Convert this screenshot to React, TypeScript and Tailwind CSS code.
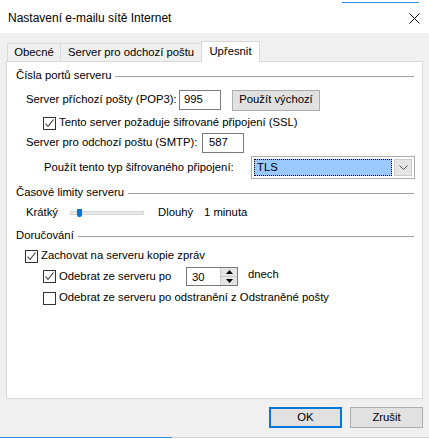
import React from "react";

function Check({ checked }: { checked: boolean }) {
  return (
    <div className="w-[13px] h-[13px] border border-[#333333] bg-white flex items-center justify-center shrink-0">
      {checked && (
        <svg width="11" height="11" viewBox="0 0 11 11">
          <polyline points="1.5,5.5 4,8.5 9.5,1.5" fill="none" stroke="#333333" strokeWidth="1.1" />
        </svg>
      )}
    </div>
  );
}

function GroupHeader({ title }: { title: string }) {
  return (
    <div className="flex items-center h-[16px] pl-[9px] pr-[8px]">
      <span className="whitespace-nowrap">{title}</span>
      <div className="flex-1 h-px bg-[#a0a0a0] ml-[4px]" />
    </div>
  );
}

export default function App() {
  return (
    <div
      className="w-[429px] h-[439px] bg-[#f0f0f0] flex flex-col overflow-hidden text-[11.3px] leading-none text-black whitespace-nowrap"
      style={{ fontFamily: '"Liberation Sans", Arial, sans-serif' }}
    >
      {/* partial window above */}
      <div className="h-[3px] bg-white flex justify-between overflow-hidden">
        <span className="mt-[-10px] ml-[8px] text-[12px] leading-[13px]">onnace u uživatel</span>
        <span className="mt-[-10px] mr-[10px] text-[12px] leading-[13px] border-b border-[#3c8ee0]">Test nastavení</span>
      </div>
      {/* title bar */}
      <div className="h-[30px] bg-white flex items-center justify-between pl-[8px] pr-[8px]">
        <span className="text-[12px]">Nastavení e-mailu sítě Internet</span>
        <svg width="11" height="11" viewBox="0 0 11 11" className="mr-[1px]">
          <line x1="0.5" y1="0.5" x2="10.5" y2="10.5" stroke="#000" strokeWidth="1" />
          <line x1="10.5" y1="0.5" x2="0.5" y2="10.5" stroke="#000" strokeWidth="1" />
        </svg>
      </div>
      {/* body */}
      <div className="flex-1 flex flex-col pt-[7px] px-[6px]">
        {/* tabs */}
        <div className="flex items-end h-[21px] pl-[1px]">
          <div className="h-[18px] w-[53px] border-t border-l border-[#d9d9d9] flex items-center justify-center bg-[#f0f0f0]">
            Obecné
          </div>
          <div className="h-[18px] w-[141px] border-t border-l border-[#d9d9d9] flex items-center justify-center bg-[#f0f0f0]">
            Server pro odchozí poštu
          </div>
          <div className="h-[21px] w-[59px] border-t border-l border-r border-[#d9d9d9] flex items-center justify-center bg-white relative z-10 mb-[-1px] pb-[1px]">
            Upřesnit
          </div>
        </div>
        {/* panel */}
        <div className="h-[338px] bg-white border border-[#d9d9d9] flex flex-col">
          <div className="mt-[6px]">
            <GroupHeader title="Čísla portů serveru" />
          </div>
          {/* POP3 */}
          <div className="mt-[6px] h-[20px] flex items-center pl-[19px]">
            <span className="w-[153px]">Server příchozí pošty (POP3):</span>
            <div className="w-[42px] h-[20px] border border-[#7a7a7a] flex items-center pl-[4px]">995</div>
            <div className="ml-[11px] w-[88px] h-[21px] bg-[#e1e1e1] border border-[#adadad] flex items-center justify-center">
              Použít výchozí
            </div>
          </div>
          {/* SSL */}
          <div className="mt-[6px] h-[14px] flex items-center pl-[36px] gap-[3px]">
            <Check checked />
            <span>Tento server požaduje šifrované připojení (SSL)</span>
          </div>
          {/* SMTP */}
          <div className="mt-[3px] h-[20px] flex items-center pl-[19px]">
            <span className="w-[176px]">Server pro odchozí poštu (SMTP):</span>
            <div className="w-[42px] h-[20px] border border-[#7a7a7a] flex items-center pl-[6px]">587</div>
          </div>
          {/* encryption */}
          <div className="mt-[3px] h-[23px] flex items-center pl-[37px]">
            <span className="w-[207px]">Použít tento typ šifrovaného připojení:</span>
            <div className="w-[164px] h-[23px] border border-[#adadad] bg-white flex items-center p-[2px] gap-[2px]">
              <div className="flex-1 h-[17px] bg-[#99c9ff] border border-dotted border-black flex items-center pl-[2px]">
                TLS
              </div>
              <div className="w-[18px] h-[17px] bg-[#e5e5e5] border border-[#cccccc] flex items-center justify-center">
                <svg width="9" height="5" viewBox="0 0 9 5">
                  <polyline points="0.5,0.5 4.5,4.5 8.5,0.5" fill="none" stroke="#555" strokeWidth="1" />
                </svg>
              </div>
            </div>
          </div>
          <div className="mt-[6px]">
            <GroupHeader title="Časové limity serveru" />
          </div>
          {/* slider */}
          <div className="mt-[4px] h-[16px] flex items-center pl-[19px]">
            <span className="w-[44px]">Krátký</span>
            <div className="w-[74px] h-[4px] bg-[#e7eaea] border border-[#d6d6d6] flex items-center">
              <div className="ml-[6px] w-[5px] h-[8px] bg-[#0078d7] rounded-b-[2px]" />
            </div>
            <span className="ml-[14px] w-[46px]">Dlouhý</span>
            <span>1 minuta</span>
          </div>
          <div className="mt-[7px]">
            <GroupHeader title="Doručování" />
          </div>
          {/* keep copies */}
          <div className="mt-[5px] h-[14px] flex items-center pl-[18px] gap-[3px]">
            <Check checked />
            <span>Zachovat na serveru kopie zpráv</span>
          </div>
          {/* remove after */}
          <div className="mt-[4px] h-[19px] flex items-center pl-[36px]">
            <Check checked />
            <span className="ml-[3px] w-[127px]">Odebrat ze serveru po</span>
            <div className="w-[52px] h-[19px] border border-[#7a7a7a] flex">
              <div className="flex-1 flex items-center pl-[5px] pt-[2px]">30</div>
              <div className="w-[17px] flex flex-col border-l border-[#cccccc]">
                <div className="flex-1 bg-[#e5e5e5] border-b border-[#cccccc] flex items-center justify-center">
                  <svg width="7" height="4" viewBox="0 0 7 4">
                    <polygon points="0,4 7,4 3.5,0" fill="#000" />
                  </svg>
                </div>
                <div className="flex-1 bg-[#e5e5e5] flex items-center justify-center">
                  <svg width="7" height="4" viewBox="0 0 7 4">
                    <polygon points="0,0 7,0 3.5,4" fill="#000" />
                  </svg>
                </div>
              </div>
            </div>
            <span className="ml-[10px] mt-[-3px]">dnech</span>
          </div>
          {/* remove after deleted */}
          <div className="mt-[5px] h-[14px] flex items-center pl-[36px] gap-[3px]">
            <Check checked={false} />
            <span>Odebrat ze serveru po odstranění z Odstraněné pošty</span>
          </div>
        </div>
        {/* buttons */}
        <div className="mt-[8px] flex justify-end gap-[8px]">
          <div className="w-[73px] h-[21px] bg-[#e1e1e1] border-2 border-[#0078d7] flex items-center justify-center">
            OK
          </div>
          <div className="w-[73px] h-[21px] bg-[#e1e1e1] border border-[#adadad] flex items-center justify-center">
            Zrušit
          </div>
        </div>
      </div>
      {/* bottom edge */}
      <div className="h-px flex">
        <div className="w-[172px] bg-[#3c8ee0]" />
        <div className="flex-1 bg-[#d0d0d0]" />
      </div>
      <div className="h-px bg-white" />
    </div>
  );
}
